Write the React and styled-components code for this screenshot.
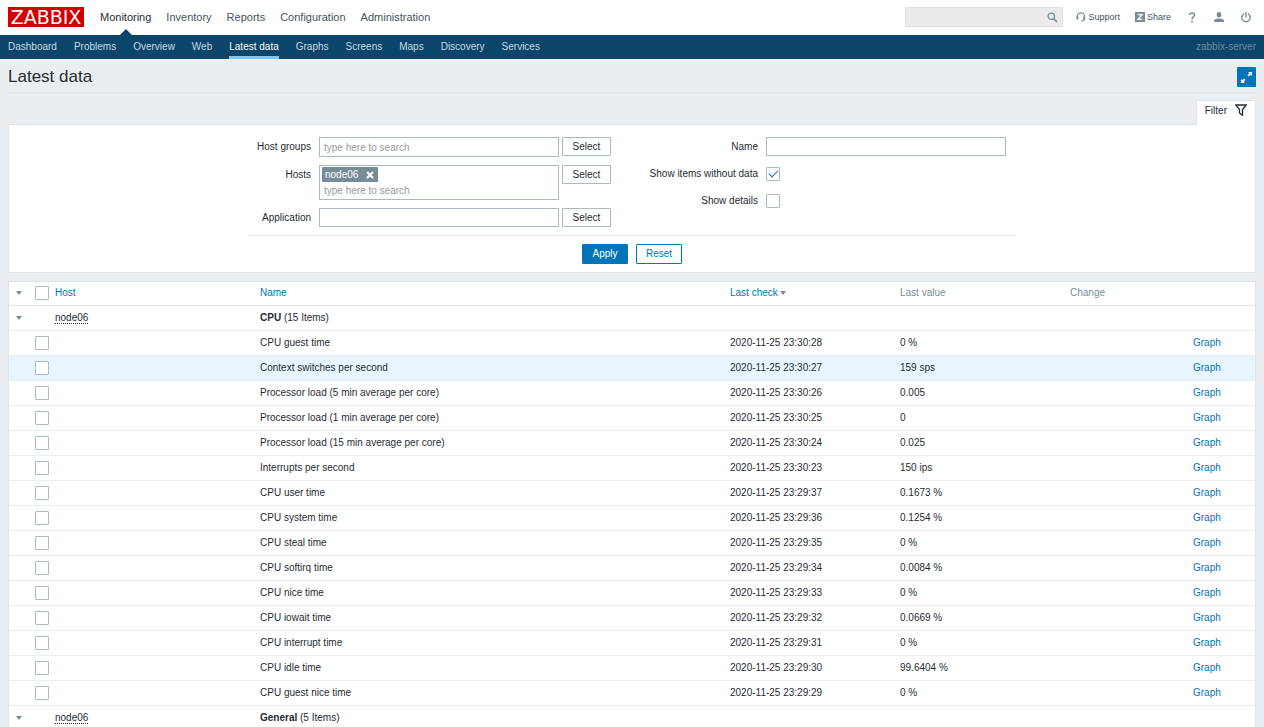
import React, { useState } from "react";
import styled, { createGlobalStyle } from "styled-components";

const GlobalStyle = createGlobalStyle`
  * {
    box-sizing: border-box;
  }

  html {
    scrollbar-width: none;
  }

  body {
    margin: 0;
    background: #ebeef0;
    color: #1f2c33;
    font-family: "Liberation Sans", Arial, sans-serif;
    font-size: 10px;
    line-height: 14px;
  }

  input, button {
    font: inherit;
    color: inherit;
  }
`;

const TopBar = styled.header`
  display: flex;
  align-items: center;
  height: 35px;
  padding: 0 12px 1px 8px;
  background: #fff;
`;

const Logo = styled.a`
  width: 76px;
  height: 20px;
  margin-right: 16px;
  background: #d40000;
  color: #fff;
  font-family: "DejaVu Sans", sans-serif;
  font-size: 19px;
  line-height: 20px;
  text-align: center;
  text-decoration: none;
`;

const MainMenu = styled.nav`
  display: flex;
  flex: 1;
  gap: 15px;
`;

const MainLink = styled.a`
  position: relative;
  color: ${props => props.$active ? "#1f2c33" : "#46535c"};
  font-size: 11px;
  line-height: 34px;
  text-decoration: none;

  &::after {
    content: "";
    display: ${props => props.$active ? "block" : "none"};
    position: absolute;
    bottom: -1px;
    left: 50%;
    margin-left: -6px;
    border: 6px solid transparent;
    border-top: 0;
    border-bottom-color: #0a466a;
  }
`;

const SearchForm = styled.form`
  display: flex;
  align-items: center;
  width: 158px;
  height: 20px;
  margin-right: 13px;
  background: #ebebeb;
  border: 1px solid #e0e0e0;
`;

const SearchInput = styled.input`
  flex: 1;
  min-width: 0;
  padding: 0 4px;
  background: none;
  border: 0;
  outline: 0;
`;

const IconButton = styled.button`
  display: flex;
  padding: 0 4px 0 0;
  background: none;
  border: 0;
`;

const UserMenu = styled.nav`
  display: flex;
  align-items: center;
  gap: 15px;
`;

const UserLink = styled.a`
  display: flex;
  align-items: center;
  justify-content: center;
  gap: 2px;
  min-width: 12px;
  color: #46535c;
  font-size: 9px;
  text-decoration: none;
`;

const SubBar = styled.div`
  display: flex;
  align-items: center;
  justify-content: space-between;
  height: 24px;
  padding: 0 8px;
  background: #0a466a;
`;

const SubMenu = styled.nav`
  display: flex;
  gap: 17px;
`;

const SubLink = styled.a`
  height: 24px;
  border-bottom: 3px solid ${props => props.$active ? "#7ec7f5" : "transparent"};
  color: ${props => props.$active ? "#fff" : "#c9dae5"};
  line-height: 24px;
  text-decoration: none;
`;

const ServerName = styled.span`
  color: #6d8ca0;
`;

const TitleBar = styled.div`
  display: flex;
  align-items: center;
  justify-content: space-between;
  height: 34px;
  margin: 0 8px;
  padding-top: 3px;
  border-bottom: 1px solid #dfe4e7;
`;

const Title = styled.h1`
  margin: 0;
  font-size: 17px;
  font-weight: normal;
  line-height: 20px;
`;

const FullscreenButton = styled.button`
  display: flex;
  align-items: center;
  justify-content: center;
  width: 19px;
  height: 20px;
  padding: 0;
  background: #0275b8;
  border: 0;
  border-radius: 1px;
`;

const Main = styled.main`
  padding: 7px 8px;
`;

const FilterTabs = styled.div`
  display: flex;
  justify-content: flex-end;
`;

const FilterTab = styled.button`
  position: relative;
  display: flex;
  align-items: flex-start;
  gap: 8px;
  height: 25px;
  margin-bottom: -1px;
  padding: 3px 8px 0;
  background: #fff;
  border: 1px solid #dfe4e7;
  border-bottom: 0;
  border-radius: 2px 2px 0 0;
`;

const TabText = styled.span`
  line-height: 14px;
`;

const FilterPanel = styled.form`
  display: flex;
  justify-content: center;
  padding: 12px 0 8px;
  background: #fff;
  border: 1px solid #dfe4e7;
`;

const FilterBody = styled.div`
  width: 766px;
`;

const FilterColumns = styled.div`
  display: flex;
  justify-content: space-between;
  padding: 0 9px 8px 8px;
  border-bottom: 1px solid #ebeef0;
`;

const FilterColumn = styled.div`
  display: grid;
  grid-template-columns: ${props => props.$labelWidth}px auto;
  align-content: start;
  gap: 8px;
`;

const FieldLabel = styled.label`
  line-height: 19px;
  text-align: right;
  white-space: nowrap;
`;

const Field = styled.div`
  display: flex;
  align-items: ${props => props.$center ? "center" : "flex-start"};
  gap: 3px;
`;

const TextInput = styled.input`
  width: 240px;
  height: ${props => props.$tall ? "20px" : "19px"};
  padding: 0 4px;
  background: #fff;
  border: 1px solid #acbbc2;
  border-radius: 0;

  &::placeholder {
    color: #9a9a9a;
  }
`;

const MultiSelect = styled.div`
  width: 240px;
  padding: 1px 2px;
  border: 1px solid #acbbc2;
`;

const Chip = styled.span`
  display: flex;
  align-items: center;
  gap: 8px;
  width: fit-content;
  height: 15px;
  padding: 0 4px 0 3px;
  background: #768d99;
  border-radius: 1px;
  color: #fff;
`;

const ChipRemove = styled.button`
  display: flex;
  padding: 0;
  background: none;
  border: 0;
`;

const InlineInput = styled.input`
  display: block;
  width: 100%;
  height: 16px;
  padding: 0 2px;
  background: none;
  border: 0;
  outline: 0;

  &::placeholder {
    color: #9a9a9a;
  }
`;

const SelectButton = styled.button`
  width: 49px;
  height: 19px;
  padding: 0;
  background: #fff;
  border: 1px solid #acbbc2;
  border-radius: 1px;
`;

const Checkbox = styled.input.attrs({ type: "checkbox" })`
  display: grid;
  place-content: center;
  width: 14px;
  height: 14px;
  margin: 0;
  appearance: none;
  background: #fff;
  border: 1px solid #acbbc2;
  border-radius: 1px;

  &:checked::before {
    content: "";
    width: 8px;
    height: 4px;
    margin-bottom: 3px;
    border: solid #0275b8;
    border-width: 0 0 1px 1px;
    transform: rotate(-45deg);
  }
`;

const FilterActions = styled.div`
  display: flex;
  justify-content: center;
  gap: 8px;
  padding-top: 8px;
`;

const ActionButton = styled.button`
  width: 46px;
  height: 20px;
  padding: 0;
  background: ${props => props.$primary ? "#0275b8" : "#fff"};
  border: 1px solid #0275b8;
  border-radius: 1px;
  color: ${props => props.$primary ? "#fff" : "#0275b8"};
`;

const DataTable = styled.table`
  width: 100%;
  margin-top: 8px;
  table-layout: fixed;
  border-collapse: separate;
  border-spacing: 0;
  background: #fff;
  border: 1px solid #dfe4e7;
`;

const HeadCell = styled.th`
  width: ${props => props.$width};
  height: 24px;
  padding: 0 5px 1px;
  border-bottom: 1px solid #dfe4e7;
  color: #768d99;
  font-weight: normal;
  text-align: left;
`;

const Row = styled.tr`
  background: ${props => props.$highlighted ? "#e8f5ff" : "#fff"};
`;

const Cell = styled.td`
  height: 25px;
  padding: 0 5px 1px;
  border-bottom: 1px solid #ebeef0;
`;

const TableLink = styled.a`
  color: #0275b8;
  text-decoration: none;
`;

const HostLink = styled.a`
  display: inline-block;
  border-bottom: 1px dotted #1f2c33;
  color: #1f2c33;
  line-height: 11px;
  text-decoration: none;
`;

const Arrow = styled.span`
  display: inline-block;
  margin: 0 2px;
  vertical-align: middle;
  border: 3px solid transparent;
  border-top: 4px solid #768d99;
  border-bottom: 0;
`;

const Toggle = styled.button`
  display: flex;
  padding: 0;
  background: none;
  border: 0;
`;

const SearchIcon = () => (
  <svg width="11" height="11" viewBox="0 0 11 11" fill="none" stroke="#768d99">
    <circle cx="4.3" cy="4.3" r="3.2" strokeWidth="1.3" />
    <path d="M6.7 6.7L10 10" strokeWidth="1.7" />
  </svg>
);

const SupportIcon = () => (
  <svg width="10" height="10" viewBox="0 0 10 10" fill="none" stroke="#768d99">
    <path d="M1.2 6V4.5a3.6 3.6 0 0 1 7.4 0V6.5Q8.6 8.9 5.5 8.9" strokeWidth="1.2" />
    <path d="M1.5 4.5v3M8.2 4.5v3" strokeWidth="1.8" />
  </svg>
);

const ShareIcon = () => (
  <svg width="10" height="10" viewBox="0 0 10 10">
    <rect width="10" height="10" fill="#768d99" />
    <path d="M2.8 2.7h4.3L3 7.3h4.4" fill="none" stroke="#fff" strokeWidth="1.3" />
  </svg>
);

const HelpIcon = () => (
  <svg width="8" height="11" viewBox="0 0 8 11" fill="none" stroke="#768d99" strokeWidth="1.5">
    <path d="M1.5 3Q1.7 1 4 1T6.5 3.1Q6.5 4.3 5.1 5.1Q4 5.8 4 7.5" />
    <path d="M4 8.8v1.7" strokeWidth="1.7" />
  </svg>
);

const UserIcon = () => (
  <svg width="10" height="10" viewBox="0 0 10 10" fill="#768d99">
    <ellipse cx="5" cy="2.7" rx="2.3" ry="2.7" />
    <path d="M0 10V8.3Q1 6.6 5 6.6T10 8.3V10z" />
  </svg>
);

const PowerIcon = () => (
  <svg width="10" height="11" viewBox="0 0 10 11" fill="none" stroke="#768d99" strokeWidth="1.4">
    <path d="M3 1.8A4.2 4.2 0 1 0 7 1.8" />
    <path d="M5 0v5.5" />
  </svg>
);

const FullscreenIcon = () => (
  <svg width="13" height="13" viewBox="0 0 13 13" fill="#fff">
    <path d="M8 1h4v4l-1.3-1.3L8.8 5.6 7.4 4.2l1.9-1.9z" />
    <path d="M5 12H1V8l1.3 1.3 1.9-1.9 1.4 1.4-1.9 1.9z" />
  </svg>
);

const FilterIcon = () => (
  <svg width="12" height="12" viewBox="0 0 12 12" fill="none" stroke="#1f2c33" strokeWidth="1.3">
    <path d="M.8 1h10.4L7.5 5.6v5.7L4.5 8.9V5.6z" />
  </svg>
);

const CrossIcon = () => (
  <svg width="8" height="8" viewBox="0 0 8 8" stroke="#fff" strokeWidth="2">
    <path d="M1 1l6 6M7 1L1 7" />
  </svg>
);

const mainMenu = ["Monitoring", "Inventory", "Reports", "Configuration", "Administration"];

const subMenu = [
  "Dashboard", "Problems", "Overview", "Web", "Latest data",
  "Graphs", "Screens", "Maps", "Discovery", "Services",
];

const cpuItems = [
  ["CPU guest time", "23:30:28", "0 %"],
  ["Context switches per second", "23:30:27", "159 sps"],
  ["Processor load (5 min average per core)", "23:30:26", "0.005"],
  ["Processor load (1 min average per core)", "23:30:25", "0"],
  ["Processor load (15 min average per core)", "23:30:24", "0.025"],
  ["Interrupts per second", "23:30:23", "150 ips"],
  ["CPU user time", "23:29:37", "0.1673 %"],
  ["CPU system time", "23:29:36", "0.1254 %"],
  ["CPU steal time", "23:29:35", "0 %"],
  ["CPU softirq time", "23:29:34", "0.0084 %"],
  ["CPU nice time", "23:29:33", "0 %"],
  ["CPU iowait time", "23:29:32", "0.0669 %"],
  ["CPU interrupt time", "23:29:31", "0 %"],
  ["CPU idle time", "23:29:30", "99.6404 %"],
  ["CPU guest nice time", "23:29:29", "0 %"],
];

function GroupRow ({host, name, count}) {
  return (
    <Row>
      <Cell><Toggle type="button" aria-label={`Toggle ${name}`}><Arrow /></Toggle></Cell>
      <Cell />
      <Cell><HostLink href="#host">{host}</HostLink></Cell>
      <Cell colSpan={5}><b>{name}</b> ({count} Items)</Cell>
    </Row>
  );
}

function ItemRow ({item, highlighted}) {
  const [name, time, value] = item;

  return (
    <Row $highlighted={highlighted}>
      <Cell />
      <Cell><Checkbox aria-label={name} /></Cell>
      <Cell />
      <Cell>{name}</Cell>
      <Cell>2020-11-25 {time}</Cell>
      <Cell>{value}</Cell>
      <Cell />
      <Cell><TableLink href="#graph">Graph</TableLink></Cell>
    </Row>
  );
}

function Filter () {
  const [withoutData, setWithoutData] = useState(true);
  const [details, setDetails] = useState(false);

  return (
    <FilterPanel onSubmit={e => e.preventDefault()}>
      <FilterBody>
        <FilterColumns>
          <FilterColumn $labelWidth={54}>
            <FieldLabel htmlFor="groups">Host groups</FieldLabel>
            <Field>
              <TextInput id="groups" placeholder="type here to search" $tall />
              <SelectButton type="button">Select</SelectButton>
            </Field>
            <FieldLabel htmlFor="hosts">Hosts</FieldLabel>
            <Field>
              <MultiSelect>
                <Chip>
                  node06
                  <ChipRemove type="button" aria-label="Remove node06"><CrossIcon /></ChipRemove>
                </Chip>
                <InlineInput id="hosts" placeholder="type here to search" />
              </MultiSelect>
              <SelectButton type="button">Select</SelectButton>
            </Field>
            <FieldLabel htmlFor="application">Application</FieldLabel>
            <Field>
              <TextInput id="application" />
              <SelectButton type="button">Select</SelectButton>
            </Field>
          </FilterColumn>
          <FilterColumn $labelWidth={115}>
            <FieldLabel htmlFor="name">Name</FieldLabel>
            <Field><TextInput id="name" /></Field>
            <FieldLabel htmlFor="without-data">Show items without data</FieldLabel>
            <Field $center>
              <Checkbox
                id="without-data"
                checked={withoutData}
                onChange={e => setWithoutData(e.target.checked)}
              />
            </Field>
            <FieldLabel htmlFor="details">Show details</FieldLabel>
            <Field $center>
              <Checkbox id="details" checked={details} onChange={e => setDetails(e.target.checked)} />
            </Field>
          </FilterColumn>
        </FilterColumns>
        <FilterActions>
          <ActionButton type="submit" $primary>Apply</ActionButton>
          <ActionButton type="reset">Reset</ActionButton>
        </FilterActions>
      </FilterBody>
    </FilterPanel>
  );
}

export default function App () {
  return (
    <>
      <GlobalStyle />
      <TopBar>
        <Logo href="#home">ZABBIX</Logo>
        <MainMenu>
          {mainMenu.map(label => (
            <MainLink key={label} href="#menu" $active={label === "Monitoring"}>{label}</MainLink>
          ))}
        </MainMenu>
        <SearchForm onSubmit={e => e.preventDefault()}>
          <SearchInput aria-label="Search" />
          <IconButton type="submit" aria-label="Search"><SearchIcon /></IconButton>
        </SearchForm>
        <UserMenu>
          <UserLink href="#support"><SupportIcon />Support</UserLink>
          <UserLink href="#share"><ShareIcon />Share</UserLink>
          <UserLink href="#help" aria-label="Help"><HelpIcon /></UserLink>
          <UserLink href="#profile" aria-label="Profile"><UserIcon /></UserLink>
          <UserLink href="#signout" aria-label="Sign out"><PowerIcon /></UserLink>
        </UserMenu>
      </TopBar>
      <SubBar>
        <SubMenu>
          {subMenu.map(label => (
            <SubLink key={label} href="#submenu" $active={label === "Latest data"}>{label}</SubLink>
          ))}
        </SubMenu>
        <ServerName>zabbix-server</ServerName>
      </SubBar>
      <TitleBar>
        <Title>Latest data</Title>
        <FullscreenButton type="button" aria-label="Fullscreen"><FullscreenIcon /></FullscreenButton>
      </TitleBar>
      <Main>
        <FilterTabs>
          <FilterTab type="button"><TabText>Filter</TabText><FilterIcon /></FilterTab>
        </FilterTabs>
        <Filter />
        <DataTable>
          <thead>
            <tr>
              <HeadCell $width="21px">
                <Toggle type="button" aria-label="Toggle all"><Arrow /></Toggle>
              </HeadCell>
              <HeadCell $width="20px"><Checkbox aria-label="Select all" /></HeadCell>
              <HeadCell $width="205px"><TableLink href="#host">Host</TableLink></HeadCell>
              <HeadCell><TableLink href="#name">Name</TableLink></HeadCell>
              <HeadCell $width="170px"><TableLink href="#last">Last check<Arrow /></TableLink></HeadCell>
              <HeadCell $width="170px">Last value</HeadCell>
              <HeadCell $width="123px">Change</HeadCell>
              <HeadCell $width="67px" />
            </tr>
          </thead>
          <tbody>
            <GroupRow host="node06" name="CPU" count={15} />
            {cpuItems.map((item, index) => (
              <ItemRow key={item[0]} item={item} highlighted={index === 1} />
            ))}
            <GroupRow host="node06" name="General" count={5} />
          </tbody>
        </DataTable>
      </Main>
    </>
  );
}
